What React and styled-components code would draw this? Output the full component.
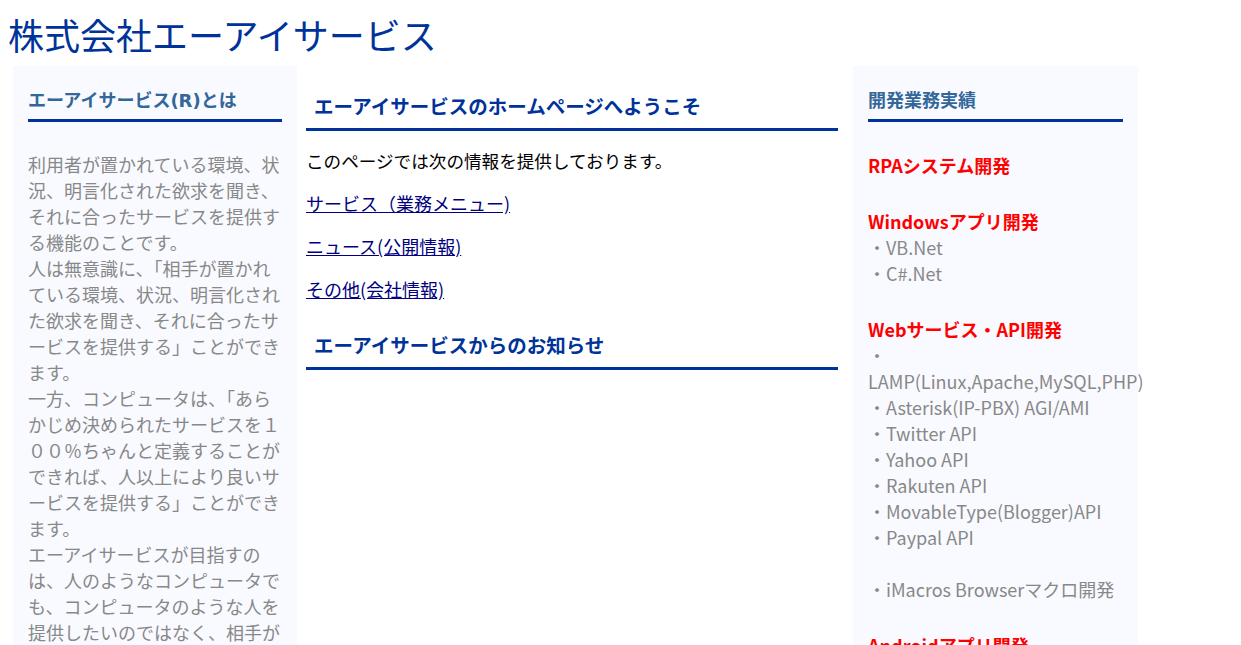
import React from "react";
import styled, { createGlobalStyle } from "styled-components";

const GlobalStyle = createGlobalStyle`
  body {
    margin: 8px;
    background: #ffffff;
    font-family: "Noto Sans CJK JP", "Noto Sans", sans-serif;
  }
`;

const SiteTitle = styled.h1`
  margin: 2px 0 8px;
  font-size: 36px;
  line-height: 48px;
  font-weight: 400;
  color: #003399;
  font-family: "Noto Sans CJK JP", sans-serif;
`;

const Columns = styled.div`
  display: flex;
  align-items: flex-start;
  padding-left: 5px;
`;

const SideBox = styled.aside`
  box-sizing: border-box;
  width: ${(p) => p.$width}px;
  margin-right: ${(p) => p.$gap || 0}px;
  padding: 22px 15px 40px;
  background: #f8faff;
  flex-shrink: 0;
`;

const SideTitle = styled.h3`
  margin: 0;
  padding-bottom: 5px;
  border-bottom: 3px solid #003399;
  font-family: "DejaVu Sans", "Noto Sans CJK JP", sans-serif;
  font-size: 18px;
  line-height: 26px;
  font-weight: 700;
  color: #336699;
`;

const SideText = styled.p`
  margin: 29px 0 0;
  font-size: 18px;
  line-height: 26px;
  color: #888888;
`;

const Main = styled.main`
  width: 532px;
  margin-right: 15px;
  flex-shrink: 0;
`;

const MainTitle = styled.h2`
  margin: ${(p) => p.$top || 26}px 0 0;
  padding: 0 0 8px 8px;
  border-bottom: 3px solid #003399;
  font-size: 19.5px;
  line-height: 28px;
  font-weight: 700;
  color: #003399;
`;

const MainText = styled.p`
  margin: 16px 0;
  font-size: ${(p) => p.$size || 18}px;
  line-height: 27px;
  color: #000000;
`;

const MainLink = styled.a`
  color: #000080;
  text-decoration: underline;
`;

const Group = styled.div`
  margin-top: 30px;
  font-size: 18px;
  line-height: 26px;
  color: #888888;
`;

const GroupTitle = styled.div`
  font-weight: 700;
  color: #ff0000;
`;

const Item = styled.div``;

const works = [
  { title: "RPAシステム開発", items: [] },
  { title: "Windowsアプリ開発", items: ["・VB.Net", "・C#.Net"] },
  {
    title: "Webサービス・API開発",
    items: [
      "・LAMP(Linux,Apache,MySQL,PHP)",
      "・Asterisk(IP-PBX) AGI/AMI",
      "・Twitter API",
      "・Yahoo API",
      "・Rakuten API",
      "・MovableType(Blogger)API",
      "・Paypal API",
      "",
      "・iMacros Browserマクロ開発",
    ],
  },
  { title: "Androidアプリ開発", items: ["・Java", "・Kotlin"] },
  { title: "iPhoneアプリ開発", items: ["・Objective-C", "・Swift"] },
];

export default function App() {
  return (
    <>
      <GlobalStyle />
      <SiteTitle>株式会社エーアイサービス</SiteTitle>
      <Columns>
        <SideBox $width={284} $gap={9}>
          <SideTitle>エーアイサービス(R)とは</SideTitle>
          <SideText>
            利用者が置かれている環境、状況、明言化された欲求を聞き、それに合ったサービスを提供する機能のことです。
            <br />
            人は無意識に、「相手が置かれている環境、状況、明言化された欲求を聞き、それに合ったサービスを提供する」ことができます。
            <br />
            一方、コンピュータは、「あらかじめ決められたサービスを１００％ちゃんと定義することができれば、人以上により良いサービスを提供する」ことができます。
            <br />
            エーアイサービスが目指すのは、人のようなコンピュータでも、コンピュータのような人を提供したいのではなく、相手が置かれている環境、状況、明言化された欲求を聞き、それに合ったサービスを提供できる仕組みを作ることです。
          </SideText>
        </SideBox>

        <Main>
          <MainTitle>エーアイサービスのホームページへようこそ</MainTitle>
          <MainText $size={17.6}>このページでは次の情報を提供しております。</MainText>
          <MainText>
            <MainLink href="#service">サービス（業務メニュー)</MainLink>
          </MainText>
          <MainText>
            <MainLink href="#news">ニュース(公開情報)</MainLink>
          </MainText>
          <MainText>
            <MainLink href="#company">その他(会社情報)</MainLink>
          </MainText>
          <MainTitle $top={28}>エーアイサービスからのお知らせ</MainTitle>
        </Main>

        <SideBox $width={285}>
          <SideTitle>開発業務実績</SideTitle>
          {works.map((w, i) => (
            <Group key={i}>
              <GroupTitle>{w.title}</GroupTitle>
              {w.items.map((it, j) =>
                it ? <Item key={j}>{it}</Item> : <br key={j} />
              )}
            </Group>
          ))}
        </SideBox>
      </Columns>
    </>
  );
}
